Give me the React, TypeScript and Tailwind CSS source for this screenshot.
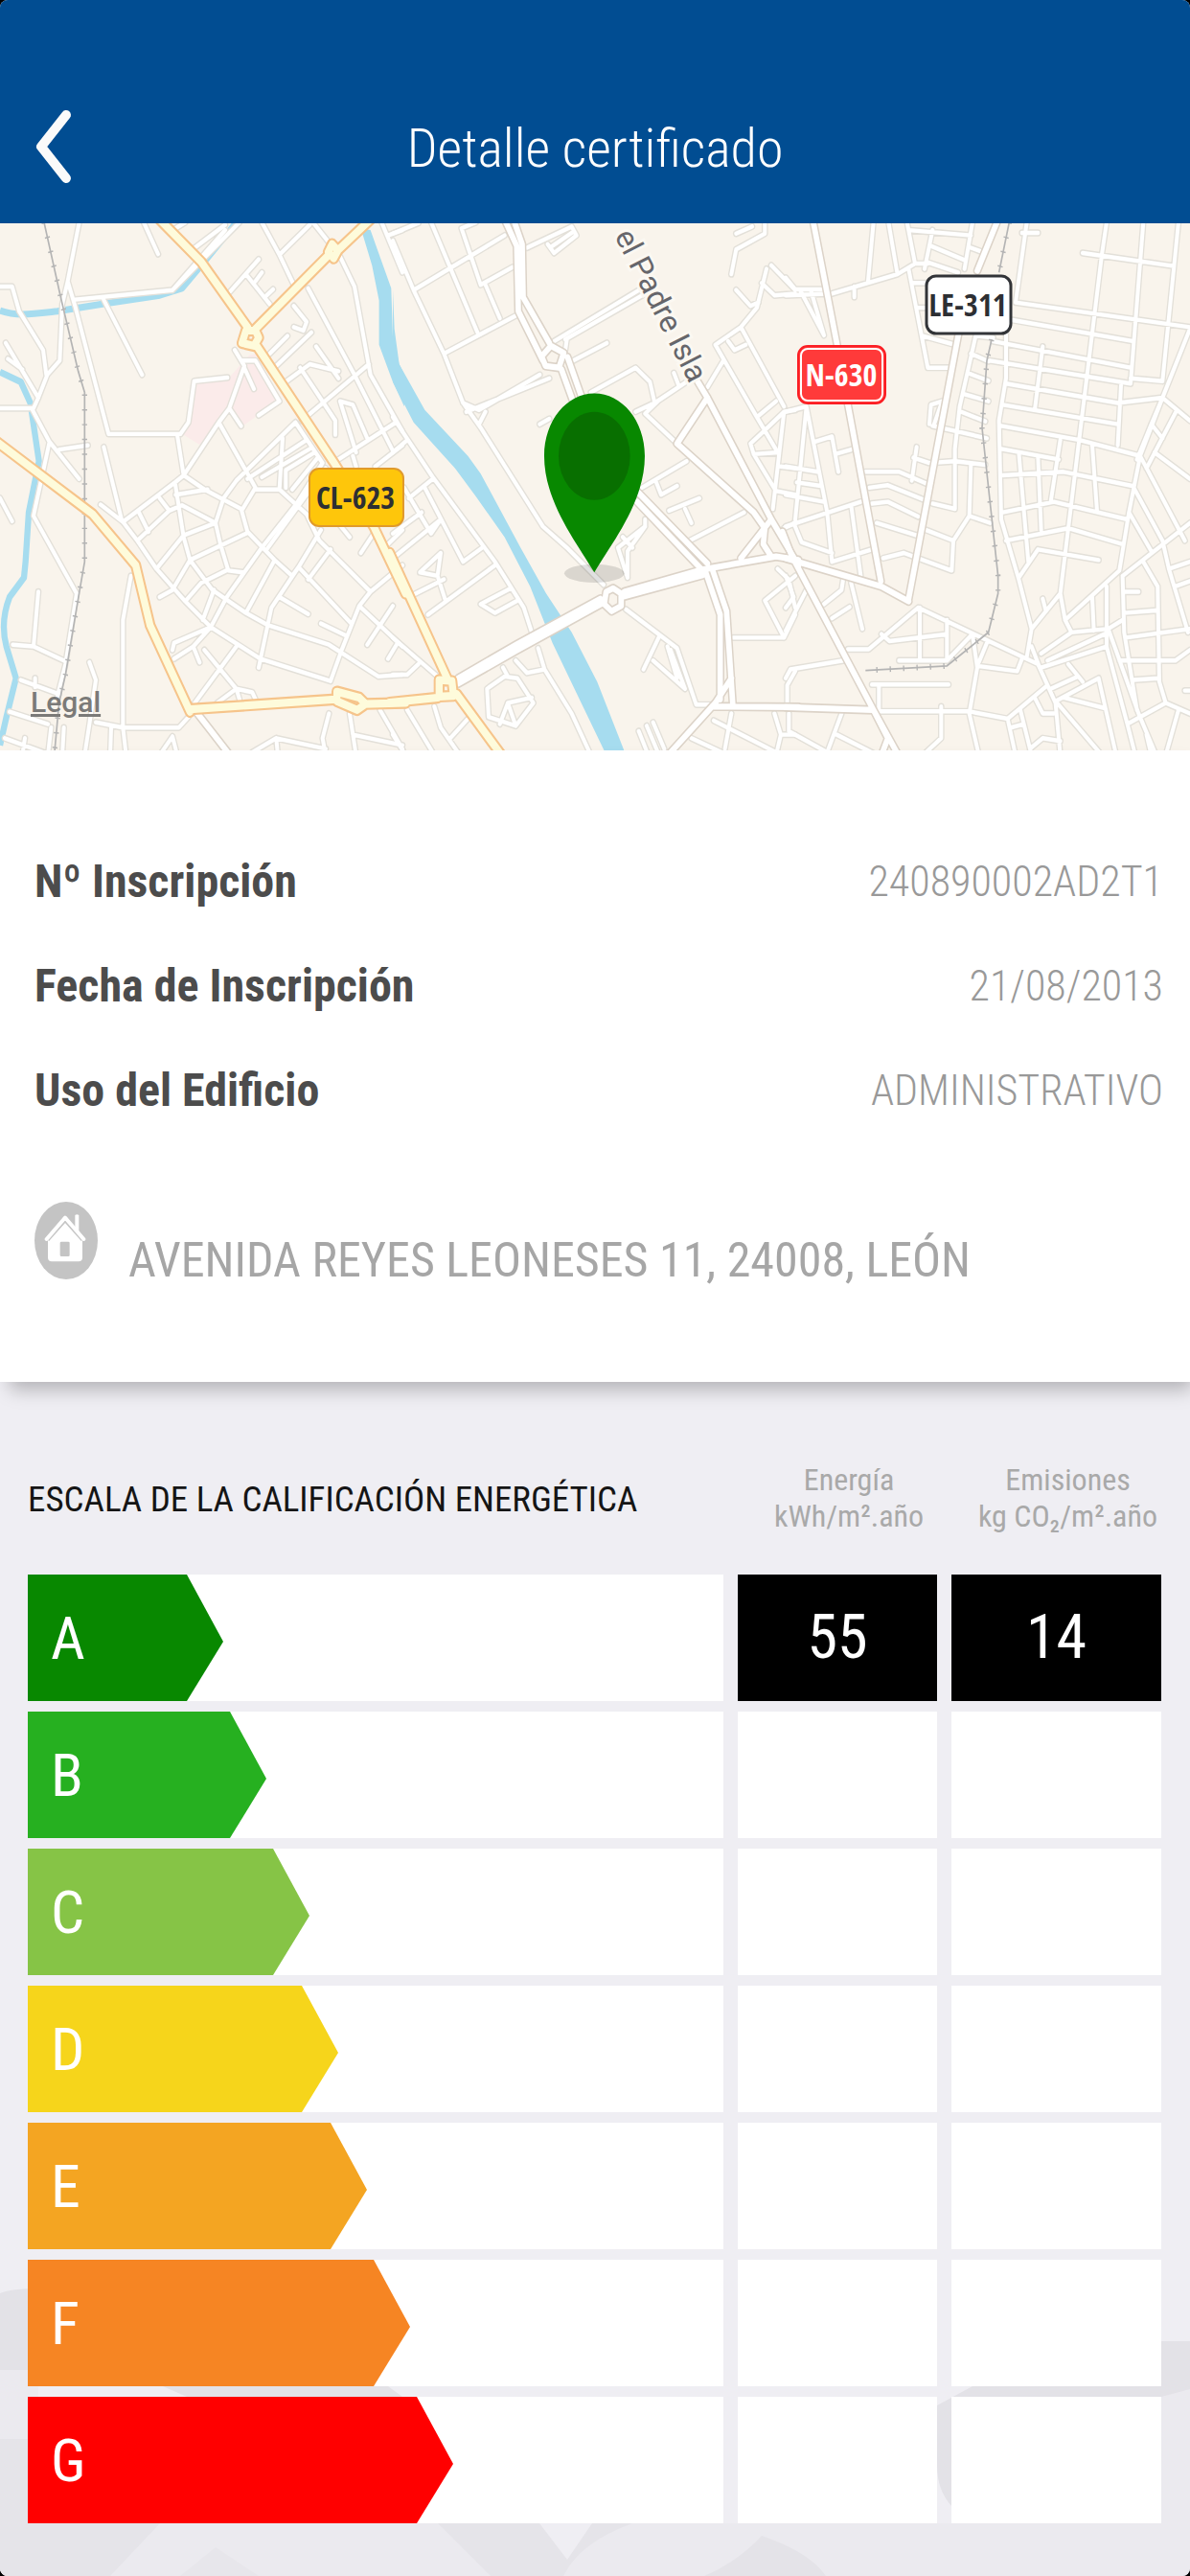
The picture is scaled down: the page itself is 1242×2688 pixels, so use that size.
type MapTile = {
  x: number;
  water: string;
  streams: string;
  minor: string;
  major: string;
  highway: string;
  rail: string;
};

type Rating = {
  letter: string;
  color: string;
  width: number;
  energy?: number;
  emissions?: number;
};

type DetailRow = {
  label: string;
  value: string;
};

const detailRows: DetailRow[] = [
  { label: 'Nº Inscripción', value: '240890002AD2T1' },
  { label: 'Fecha de Inscripción', value: '21/08/2013' },
  { label: 'Uso del Edificio', value: 'ADMINISTRATIVO' },
];

const ratings: Rating[] = [
  { letter: 'A', color: 'bg-[#088800]', width: 204, energy: 55, emissions: 14 },
  { letter: 'B', color: 'bg-[#26b020]', width: 249 },
  { letter: 'C', color: 'bg-[#86c446]', width: 294 },
  { letter: 'D', color: 'bg-[#f6d51b]', width: 324 },
  { letter: 'E', color: 'bg-[#f4a522]', width: 354 },
  { letter: 'F', color: 'bg-[#f68523]', width: 399 },
  { letter: 'G', color: 'bg-[#ff0000]', width: 444 },
];

// Each tile has its own drawing grid and is placed at its own x
const tiles: MapTile[] = [
  {
    x: 0,
    water: 'M1130 55 L1160 60 L1225 225 L1230 360 L1250 440 L1266 470 V560 L1230 490 L1187 385 L1187 260 L1165 160Z',
    streams:
      'M0 288 C50 305 100 298 180 290 L330 268 L500 245 L570 225 L640 150 L740 38 M0 462 L65 490 L95 550 L122 715 L90 860 L80 1000 L75 1045 L30 1100 Q0 1170 20 1240 L50 1330 L20 1440 L0 1520',
    minor: `M248 38 L212 205 L195 270 L187 430 L148 470 L120 535 L105 565 H0 M0 220 H38 L60 290 L135 400 L145 470
      M18 380 L120 535 M25 425 L70 455 M212 205 L235 275 L340 638 H565 L590 605 L608 488 L712 478
      M235 257 L540 230 L705 60 M610 110 L705 45 M540 230 L750 38 M325 258 L445 470 M450 38 L495 128 M550 55 L580 38
      M102 570 L155 660 L105 870 L240 1090 L205 1290 L180 1380 M155 660 L248 765 M185 682 L275 670 M0 820 L38 885
      M325 675 L382 885 M315 838 L385 887 L430 940 L490 1020 L580 1112 L660 1185 L815 1275 L1035 1338
      M385 887 L548 775 L575 755 L685 605 L718 565 L765 445 L735 400 M555 640 L575 755 L640 795 L755 850 L775 915 L860 995 L915 1040
      M430 940 L530 855 L570 840 L675 890 L690 950 L715 1025 L760 1030
      M548 775 L575 930 L595 995 L665 1080 L770 1145 L840 1180 L1030 1235 L1185 1325 L1260 1320
      M550 810 L650 795 M675 890 L700 820 L740 770 L925 605 M490 1020 L575 925 L675 890 M500 1100 L540 1080 L595 995 L775 918
      M580 1112 L630 1060 L715 1022 M685 605 L800 790 L760 850 M800 795 H875 L885 650 M775 765 L960 655 M820 760 L970 680
      M875 795 L960 865 L1000 940 L1160 1085 L1260 1010 M895 790 V740 L985 690 M915 795 L995 705
      M770 1145 L860 995 M635 1165 L670 1080 M660 1185 L710 1100 L820 960 L925 840 L1010 720 M835 965 L1020 735
      M925 605 L1010 720 M1005 910 L935 1015 L850 1130 L810 1300 M915 1040 L935 1015 L1100 1175 M965 1050 L1035 965
      M875 1100 L965 1148 M1035 1338 L1070 1250 L1125 1125 L1160 1085 M1125 1125 L1260 1240
      M1005 1175 L1085 1210 M1150 1235 L1230 1125 M1215 1275 L1245 1230 M435 860 L465 915 M500 820 L530 855
      M720 235 L810 143 M770 185 L845 270 M800 205 L820 180 M835 245 L855 228 M875 130 L970 45
      M820 38 L875 130 L920 215 M965 225 L1110 470 L1230 685 M980 38 L1065 135 L1110 220 L1160 470 L1260 630
      M1195 38 L1260 180 M1215 75 L1260 60 M920 275 L960 320 L950 345 L920 335 M845 410 L900 360 M865 445 L975 350
      M895 490 L970 440 L1060 460 M990 390 L1060 480 M940 450 L1050 600 V640 M945 600 L1155 440
      M1115 690 L1065 545 L1105 555 L1150 650 M1060 710 L1240 605 M1175 730 L1260 670 M1105 700 L1115 730
      M1130 975 L1170 920 M1215 950 L1260 910 M1050 880 L1095 930 M760 430 H800 L875 545 L810 585 M765 450 L795 510
      M718 565 L755 615 M410 1040 L385 1165 V1470 L395 1548 M120 1085 L105 1240 M40 1235 L105 1240 L200 1280
      M280 1285 L300 1335 L280 1460 L265 1548 M65 1335 L185 1375 M110 1330 V1355 M30 1425 L150 1460
      M300 1455 L385 1470 H560 L590 1440 M500 1548 L540 1495 L555 1548 M545 1275 L605 1240 L660 1185 M605 1240 L625 1285
      M540 1250 L545 1230 L660 1185 M640 1250 L740 1360 L750 1390 M610 1400 L740 1240 M680 1400 L740 1360 L790 1370 L800 1390
      M150 1548 L160 1470 M195 1548 L200 1470 M345 1548 L348 1470 M15 1500 L150 1545 M70 1548 L78 1500
      M790 1540 L865 1500 L1020 1530 M865 1500 L870 1548 M1030 1430 L1010 1500 L1020 1548 M1095 1430 L1115 1548
      M1105 1490 L1260 1520 M1190 1420 L1260 1530`,
    major: 'M610 1420 L730 1560',
    highway: `M500 30 L630 150 L775 335 M800 340 L1030 130 M1055 120 L1160 30 M805 390 L1050 725 L1170 900 L1270 1090
      M-10 660 L290 865 L425 1010 L470 1180 L595 1425 M595 1418 L1050 1390 M1140 1403 L1270 1400
      M770 345 H800 L810 365 L795 388 L758 380Z M1040 100 L1058 118 L1045 140 L1028 122Z M1055 1368 L1125 1385 L1145 1403 L1118 1420 L1055 1395Z`,
    rail: 'M138 38 L190 250 L245 460 L265 520 V1000 L240 1130 L205 1320 L185 1400 L170 1548',
  },
  {
    x: 410,
    water:
      'M0 230 L5 340 L20 440 L100 570 L235 700 L275 750 L400 960 L480 1090 L560 1200 L640 1340 L735 1560 L675 1560 L590 1400 L500 1230 L430 1070 L350 930 L260 815 L195 735 L65 605 L0 490Z',
    streams: '',
    minor: `M0 90 L65 230 L160 410 L220 550 L275 620 L470 900 L545 960 L660 1065 M0 70 L80 40 M120 38 L265 350 M65 230 L350 75
      M215 55 L275 215 L375 165 M215 55 L260 38 M290 215 L335 310 M160 410 L390 300
      M420 110 L560 50 L575 75 L505 125 L485 100 M500 105 L565 65 M505 375 L780 225 M540 370 L790 240
      M220 550 L270 570 L460 470 M230 575 L490 480 M290 575 L270 610 M545 370 L540 400 M565 430 L670 380
      M620 520 L760 450 L805 490 L820 550 L920 490 M460 610 L490 595 M760 575 L830 545 L790 580 L890 665
      M880 465 L895 500 M1075 70 L1125 50 M1165 38 V70 L1075 115 L1060 185
      M1075 230 L1120 275 L1145 265 M1170 170 L1140 280 L1090 335 L1010 385 L1140 590 L1205 690 M1155 210 L1195 245 L1260 240
      M1185 160 L1260 230 M1090 335 L1225 560 M1050 375 L1070 400 L1105 385 M985 505 L1035 430 M1140 590 L1200 545
      M1260 570 L1225 575 L1150 640 L1120 665 L1130 695 L1210 690 M1225 575 L1190 850 M1130 695 L1200 800
      M1215 730 L1260 735 M1205 800 L1260 810 M1225 905 L1260 890 M780 790 L920 715 M825 775 L840 810 L890 785
      M865 855 L960 820 M915 850 L935 890 M930 940 L1100 860 M790 880 V900 L735 970 V1045 M735 1045 L705 960 L790 900
      M720 930 L750 960 M730 1135 L890 1245 L950 1405 H1000 M835 1210 L785 1305 M815 1280 L915 1360 L870 1250 M860 1240 L890 1330
      M1065 1215 H1225 L1260 1150 M1225 1215 L1165 1110 L1260 1040 M1205 1020 L1240 1050 L1260 1130
      M1235 1400 V1350 L1260 1310 M0 590 L125 760 L320 1000 L410 1130 L435 1200 M0 690 L45 655 M50 820 L125 765
      M0 920 L90 860 M35 790 L120 920 L150 880 M0 990 L150 880 M100 790 L220 1000 L280 960
      M85 1030 L150 975 L140 1040Z M110 1150 L320 1010 M50 1100 L160 1050 M140 1040 L165 1110
      M390 1110 L320 1145 L275 1120 L370 1075 M455 1245 L475 1305 L560 1430 L620 1548 M385 1280 L420 1315 L475 1305
      M0 1215 L140 1325 M0 1320 H45 L80 1290 M295 1360 L350 1325 L390 1330 L440 1400 L385 1465 L300 1440Z M345 1300 L360 1325
      M335 1460 L360 1400 L435 1385 M360 1400 L385 1465 M0 1490 L40 1548 M45 1420 L130 1548 M130 1410 L150 1470 L210 1548
      M180 1500 L240 1440 M770 1480 L800 1548 M795 1465 L830 1540 M815 1455 L850 1530 M935 1500 L1030 1540
      M1005 1450 L1200 1540 M1060 1430 L1040 1530 M1195 1430 L1215 1490 L1200 1548 M1215 1490 H1260`,
    major: `M350 30 L388 105 L393 290 L470 430 M378 30 L405 100 L408 250 L490 380 M495 388 L535 408 L520 450 L478 445 L466 418Z
      M528 455 L570 560 M547 420 L590 530 M770 805 L985 1005 M765 830 L965 1020 M955 490 L985 535 L1185 880 L1270 1010
      M985 535 L890 665 L1130 860 L1165 905 L1160 950 L1185 985 M1185 880 L1090 990 M205 1345 L390 1250 L655 1118
      M205 1330 L390 1233 L650 1105 M690 1075 L715 1090 V1125 L685 1140 L662 1120 L668 1085Z
      M725 1085 L970 1022 L1200 985 L1270 995 M725 1098 L970 1038 M980 1030 L1025 1150 V1390 M1000 1020 L1045 1140 L1065 1410
      M1060 1330 L1010 1400 L850 1560 M1000 1410 L1270 1412`,
    highway: 'M-10 975 L170 1330 M200 1375 L350 1560 M-10 1399 L140 1385 M145 1335 L185 1338 L190 1380 L145 1382Z',
    rail: '',
  },
  {
    x: 820,
    water: '',
    streams: '',
    minor: `M275 38 L258 205 M322 38 L350 185 M0 245 L145 240 L350 185 L405 155 L445 155 M380 38 L405 155 M215 220 V250
      M0 195 L30 228 H120 M45 230 L120 358 L80 235 M385 60 L580 75 M460 60 L435 170 M455 105 L560 145 M585 38 L560 170
      M440 150 L540 180 M580 110 L610 120 M385 170 L445 450 H520 M395 210 H440 M415 280 H440 M430 360 L530 385
      M755 38 L720 265 L1266 335 M740 68 H790 M710 315 L1090 375 M650 375 L1080 450 M640 430 L1080 495 M1080 480 L1180 488
      M690 350 V480 L668 600 L675 880 L730 1050 L770 1190 L755 1270 M690 495 L1040 550 L1180 535 L1266 600
      M680 555 L1040 610 M675 615 L920 655 L1110 700 M675 680 L855 710 M680 755 L870 745 L1085 785
      M680 860 L840 830 L1070 880 M690 940 L885 905 L1055 950 M1005 38 L990 130 L885 905 L860 1090 L875 1165 L895 1200
      M1120 38 L1080 495 M1230 38 L1180 488 M930 125 L1215 162 M1050 500 L1040 670
      M1266 340 L1180 535 L1110 700 L1075 860 L1045 1025 L875 1165 M805 390 L780 570 M730 690 L760 1000 M790 700 L800 910
      M860 655 L830 830 M960 670 L975 855 M595 360 L545 560 L530 680 V850 L460 835 M600 360 L650 365
      M580 410 L635 432 M570 465 L635 487 M560 525 L635 545 M550 575 L625 602 M460 615 L630 650
      M450 610 L455 555 L490 545 L465 610 M410 675 L395 770 M400 705 L450 720 L530 715 L625 725
      M580 725 L575 870 L525 940 L440 910 M575 870 L640 890 M525 940 L520 1025 L370 975 L305 990
      M250 745 H355 L440 778 M262 790 L320 783 L435 825 M270 835 L320 830 L415 872 M285 890 L410 925
      M0 575 L65 560 L130 860 L145 1000 L270 965 M65 560 L30 880 M90 660 L145 645 L165 745 M155 695 L205 682
      M0 730 L100 745 M35 775 L110 785 M0 810 L120 830 M0 900 L235 830 M205 840 L235 1040 M25 890 L50 945 L145 975
      M205 1060 L240 1190 M120 1120 L175 1080 L180 1050 M145 1160 L200 1128 M0 1195 L65 1080 M0 1040 L25 1100 L0 1130
      M195 1248 H260 L415 1130 L590 1205 L790 1290 M300 1205 L325 1225 L505 1205 M420 1130 V1280 M355 1280 H505 L585 1205
      M505 1165 V1280 M270 1348 H510 M292 1350 V1420 M275 1424 H575 L695 1445 L820 1350
      M585 1205 L600 1300 L575 1430 L605 1548 M600 1295 L725 1310 L740 1275 M630 1230 L605 1285 M487 1410 V1500 L430 1548
      M0 1330 L15 1305 L180 1280 M10 1430 V1480 L130 1540 L175 1430 M160 1490 L280 1545 M730 1045 L790 965 L980 995
      M770 1190 L860 1090 M805 1105 L815 1140 M790 1290 L820 1350 L845 1400 L860 1548 M695 1445 L720 1548
      M735 1420 L770 1548 M705 1470 L745 1460 M765 1530 L805 1500 L860 1508 M780 1385 L805 1430 H840 M770 1240 L800 1310
      M800 1260 L895 1200 L1010 1190 M820 1280 L1010 1200 M800 1300 L1005 1240 M845 1395 L980 1330 L1035 1548
      M830 1360 L915 1325 M885 1290 L930 1340 M870 1385 L1000 1415 M850 1400 L990 1548 M1005 1070 V1240 L1070 1460 L1095 1548
      M960 1100 L965 1195 M1010 1190 L1105 1430 L1160 1548 M1055 1040 L1060 1200 L1100 1420 M1055 1040 L1266 890
      M1060 1085 H1105 M1060 1145 L1160 1138 M1065 1215 L1266 1190 M1045 1280 H1220 L1266 1250 M1090 1335 L1165 1330
      M1120 1000 L1165 1070 L1170 1340 L1190 1400 L1070 1460 M1190 1400 L1266 1430 M1230 1420 L1190 1548 M1130 1490 L1145 1548
      M1010 1190 L1055 1165 M1090 790 L1180 940 L1200 1020 L1260 1200 M1075 860 L1145 970 M1110 700 L1250 940
      M1200 1020 L1266 1000 M1220 1070 L1266 1055 M1155 690 L1266 765 M1130 735 L1225 570 M1145 610 L1180 650
      M1180 535 L1145 610 L1100 710 M1250 1365 H1266`,
    major: `M85 30 L160 380 L195 555 L298 1055 M600 175 L665 30 M575 230 L540 360 L385 1105 M-10 915 L20 985 L275 1420 L360 1560
      M0 990 L300 1070 L385 1112 M0 1412 L275 1420 L320 1500 L295 1560`,
    highway: '',
    rail: 'M700 38 L668 180 M645 370 L630 430 L615 620 L635 790 L665 1040 L665 1090 L635 1200 L505 1295 L250 1308',
  },
];

const tileTransform = (tile: MapTile) => `translate(${tile.x} -15) scale(0.3333 0.3682)`;

const RoadLayer = ({ kind }: { kind: 'minor' | 'major' | 'highway' }) => {
  const styles = {
    minor: { casing: '#e3e0d9', fill: '#ffffff', outer: 20, inner: 12 },
    major: { casing: '#dcd3c8', fill: '#ffffff', outer: 26, inner: 17 },
    highway: { casing: '#f6c48b', fill: '#fefbdb', outer: 34, inner: 22 },
  }[kind];

  return (
    <g fill="none" strokeLinecap="round" strokeLinejoin="round">
      {tiles.map((tile) => (
        <path key={tile.x} d={tile[kind]} transform={tileTransform(tile)} stroke={styles.casing} strokeWidth={styles.outer} />
      ))}
      {tiles.map((tile) => (
        <path key={tile.x} d={tile[kind]} transform={tileTransform(tile)} stroke={styles.fill} strokeWidth={styles.inner} />
      ))}
    </g>
  );
};

const LocationMap = () => (
  <div className="relative">
    <svg
      viewBox="0 0 1242 550"
      preserveAspectRatio="xMidYMid slice"
      className="block h-[550px] w-full bg-[#f9f4ec]"
      role="img"
      aria-label="Mapa"
    >
      <path
        d="M605 490 L720 475 L780 415 L800 410 L870 545 L760 615 L720 570 L625 668 L575 640Z"
        transform={tileTransform(tiles[0])}
        fill="#fbebea"
      />
      {tiles.map((tile) => (
        <g key={tile.x} transform={tileTransform(tile)}>
          <path d={tile.water} fill="#a6dcef" />
          <path d={tile.streams} fill="none" stroke="#a6dcef" strokeWidth="19" strokeLinejoin="round" />
        </g>
      ))}
      <RoadLayer kind="minor" />
      {tiles.map((tile) => (
        <g key={tile.x} transform={tileTransform(tile)} fill="none" stroke="#b4b4b4">
          <path d={tile.rail} strokeWidth="5" />
          <path d={tile.rail} strokeWidth="16" strokeDasharray="4 38" />
        </g>
      ))}
      <RoadLayer kind="major" />
      <RoadLayer kind="highway" />

      <text
        x="720"
        y="168"
        textAnchor="end"
        transform="rotate(63 720 168)"
        className="font-['Roboto',sans-serif]"
        fontSize="32"
        fill="#66666b"
        stroke="#fbf8f2"
        strokeWidth="6"
        paintOrder="stroke"
      >
        el Padre Isla
      </text>

      <g textAnchor="middle" fontSize="32" className="font-['Open_Sans_Condensed','Roboto_Condensed',sans-serif] font-bold">
        <rect x="323" y="256" width="98" height="60" rx="10" fill="#fec60b" stroke="#e09a2c" strokeWidth="2" />
        <text x="371" y="298" fill="#2d2f33">CL-623</text>
        <rect x="833" y="128" width="91" height="60" rx="10" fill="#ff3a3a" stroke="#fb1e24" strokeWidth="2" />
        <rect x="836" y="131" width="85" height="54" rx="7" fill="none" stroke="#ffffff" strokeWidth="2" />
        <text x="878" y="170" fill="#ffffff">N-630</text>
        <rect x="967" y="55" width="88" height="60" rx="10" fill="#ffffff" stroke="#323438" strokeWidth="3" />
        <text x="1010" y="97" fill="#2d2f33">LE-311</text>
      </g>

      <g transform={tileTransform(tiles[1])}>
        <ellipse cx="631" cy="1033" rx="94" ry="26" fill="#000000" fillOpacity="0.12" />
        <path d="M631 1030 C575 945 474 830 474 700 C474 600 545 523 631 523 C717 523 789 600 789 700 C789 830 687 945 631 1030Z" fill="#088800" />
        <ellipse cx="631" cy="700" rx="112" ry="125" fill="#086f00" />
      </g>
    </svg>
    <a href="#legal" className="absolute bottom-8 left-8 font-['Roboto',sans-serif] text-[30px] leading-9 font-medium text-[#7b7a78] underline">
      Legal
    </a>
  </div>
);

const HomeIcon = () => (
  <svg viewBox="0 0 198 243" preserveAspectRatio="none" className="h-[81px] w-[66px] shrink-0" aria-hidden="true">
    <ellipse cx="99" cy="121.5" rx="99" ry="121.5" fill="#c4c4c4" />
    <path d="M127 42 Q133 38 139 42 V102 L127 86Z" fill="#ffffff" />
    <path d="M38 117 L96 50 L154 117" fill="none" stroke="#ffffff" strokeWidth="12" strokeLinecap="round" strokeLinejoin="round" />
    <path d="M42 118 L96 64 L150 118 V175 Q150 187 138 187 H54 Q42 187 42 175Z" fill="#ffffff" />
    <path d="M44 122 L96 63 L148 122" fill="none" stroke="#c4c4c4" strokeWidth="4" />
    <rect x="80" y="125" width="30" height="46" rx="4" fill="#c4c4c4" />
  </svg>
);

const Watermark = () => (
  <svg viewBox="0 0 1242 300" preserveAspectRatio="none" className="absolute bottom-0 left-0 h-[300px] w-full" aria-hidden="true">
    <path d="M0 85 H40 V245 H1212 V105 H1242 V300 H0Z" fill="#ebeaef" />
    <path d="M0 5 Q12 0 40 0 V85 H0Z M170 102 H405 L420 113 H195Z" fill="#e3e2e7" />
    <path d="M1015 102 H1212 V55 H1242 V105 L1212 113 H993 V227 Q978 210 978 185 V122Z" fill="#e3e2e7" />
    <path d="M0 157 H29 V245 H167 L115 300 H0Z" fill="#e5e4e9" />
    <path d="M225 270 L270 300 H188Z" fill="#e7e6eb" />
    <path d="M457 245 H660 Q605 265 588 300 H512Z" fill="#e5e4e9" />
    <path d="M563 245 H618 L592 283Z" fill="#efeef3" />
    <path d="M795 258 Q845 275 862 300 H735 Q770 285 795 258Z" fill="#e4e3e8" />
  </svg>
);

const RatingRow = ({ rating }: { rating: Rating }) => (
  <tr className="h-[132px]">
    <th scope="row" className="bg-white p-0 text-left font-normal">
      <div
        className={`${rating.color} flex h-[132px] items-center pl-6 text-[62px] text-white [clip-path:polygon(0_0,calc(100%-38px)_0,100%_53%,calc(100%-38px)_100%,0_100%)]`}
        style={{ width: rating.width }}
      >
        {rating.letter}
      </div>
    </th>
    {[rating.energy, rating.emissions].map((value, index) => (
      <td key={index} className={`p-0 text-center text-[64px] text-white ${value === undefined ? 'bg-white' : 'bg-black'}`}>
        {value}
      </td>
    ))}
  </tr>
);

export default function App() {
  return (
    <div className="bg-black">
      <div className="relative flex min-h-screen flex-col overflow-hidden rounded-lg bg-[#efeef3] font-['Roboto_Condensed','Roboto','Liberation_Sans',sans-serif]">
        <header className="grid grid-cols-[1fr_auto_1fr] items-center bg-[#014d92] px-8 pt-[73px] text-white">
          <button type="button" aria-label="Volver" className="flex h-40 w-12 items-center">
            <svg viewBox="0 0 48 84" className="h-[84px] w-12" aria-hidden="true">
              <path d="M37 9 L11 42 L37 75" fill="none" stroke="#fafafa" strokeWidth="10" strokeLinecap="round" strokeLinejoin="round" />
            </svg>
          </button>
          <h1 className="pt-1 text-[56px] leading-none font-light">Detalle certificado</h1>
        </header>

        <LocationMap />

        <section className="relative z-10 bg-white pt-[82px] pr-7 pl-9 pb-[102px] shadow-[6px_12px_18px_-4px_rgba(0,0,0,0.25)]">
          <dl>
            {detailRows.map((row) => (
              <div key={row.label} className="flex h-[109px] items-center justify-between">
                <dt className="text-[48px] font-bold text-[#4c4c4c]">{row.label}</dt>
                <dd className="text-[44px] font-light text-[#999999]">{row.value}</dd>
              </div>
            ))}
          </dl>
          <div className="mt-[62px] flex items-start gap-8">
            <HomeIcon />
            <address className="pt-9 text-[50px] leading-none text-[#a6a6a6] not-italic">AVENIDA REYES LEONESES 11, 24008, LEÓN</address>
          </div>
        </section>

        <section className="relative grow">
          <Watermark />
          <div className="relative pr-[15px] pl-[14px]">
            <table className="w-full table-fixed border-separate border-spacing-x-[15px] border-spacing-y-[11px]">
              <colgroup>
                <col />
                <col className="w-[208px]" />
                <col className="w-[219px]" />
              </colgroup>
              <thead>
                <tr className="h-[179px]">
                  <th scope="col" className="p-0 pt-[45px] text-left text-[37px] font-normal text-[#151515]">
                    ESCALA DE LA CALIFICACIÓN ENERGÉTICA
                  </th>
                  <th scope="col" className="p-0 pt-10 pl-6 text-[32px] leading-[38px] font-normal text-[#a9a9a9]">
                    Energía
                    <br />
                    kWh/m².año
                  </th>
                  <th scope="col" className="p-0 pt-10 pl-6 text-[32px] leading-[38px] font-normal whitespace-nowrap text-[#a9a9a9]">
                    Emisiones
                    <br />
                    kg CO₂/m².año
                  </th>
                </tr>
              </thead>
              <tbody>
                {ratings.map((rating) => (
                  <RatingRow key={rating.letter} rating={rating} />
                ))}
              </tbody>
            </table>
          </div>
        </section>
      </div>
    </div>
  );
}
